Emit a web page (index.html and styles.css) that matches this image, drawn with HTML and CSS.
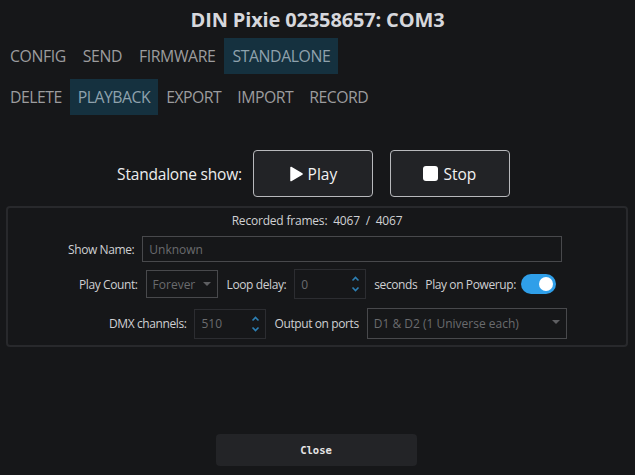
FILE: index.html
```html
<!DOCTYPE html>
<html lang="en">
<head>
  <meta charset="UTF-8">
  <title>DIN Pixie 02358657: COM3</title>
  <link rel="stylesheet" href="styles.css">
</head>
<body>
  <h1 class="title">DIN Pixie 02358657: COM3</h1>

  <nav class="tabs main">
    <a class="tab">CONFIG</a>
    <a class="tab">SEND</a>
    <a class="tab">FIRMWARE</a>
    <a class="tab active">STANDALONE</a>
  </nav>
  <nav class="tabs sub">
    <a class="tab">DELETE</a>
    <a class="tab active">PLAYBACK</a>
    <a class="tab">EXPORT</a>
    <a class="tab">IMPORT</a>
    <a class="tab">RECORD</a>
  </nav>

  <div class="show-row">
    <span class="show-label">Standalone show:</span>
    <button class="big-btn play">
      <svg width="14" height="16" viewBox="0 0 14 16"><path d="M2 1.5 L13 8 L2 14.5 Z" fill="#fff" stroke="#fff" stroke-width="1.5" stroke-linejoin="round"/></svg>
      Play
    </button>
    <button class="big-btn stop">
      <svg width="15" height="15" viewBox="0 0 15 15"><rect x="0" y="0" width="15" height="15" rx="3" fill="#fff"/></svg>
      Stop
    </button>
  </div>

  <section class="panel">
    <div class="frames">Recorded frames:&nbsp; 4067 &nbsp;/&nbsp; 4067</div>

    <div class="row row-name">
      <label class="lbl">Show Name:</label>
      <div class="field name-field">Unknown</div>
    </div>

    <div class="row row-count">
      <label class="lbl">Play Count:</label>
      <div class="field select count-select">Forever<span class="caret"></span></div>
      <label class="lbl">Loop delay:</label>
      <div class="field spin">0
        <span class="arrows">
          <svg width="9" height="16" viewBox="0 0 9 16"><path d="M1.5 4.5 L4.5 1.5 L7.5 4.5" fill="none" stroke="#2d7fb3" stroke-width="1.6"/><path d="M1.5 11.5 L4.5 14.5 L7.5 11.5" fill="none" stroke="#2d7fb3" stroke-width="1.6"/></svg>
        </span>
      </div>
      <span class="lbl">seconds</span>
      <label class="lbl">Play on Powerup:</label>
      <span class="toggle"><span class="knob"></span></span>
    </div>

    <div class="row row-dmx">
      <label class="lbl">DMX channels:</label>
      <div class="field spin">510
        <span class="arrows">
          <svg width="9" height="16" viewBox="0 0 9 16"><path d="M1.5 4.5 L4.5 1.5 L7.5 4.5" fill="none" stroke="#2d7fb3" stroke-width="1.6"/><path d="M1.5 11.5 L4.5 14.5 L7.5 11.5" fill="none" stroke="#2d7fb3" stroke-width="1.6"/></svg>
        </span>
      </div>
      <label class="lbl">Output on ports</label>
      <div class="field select ports-select">D1 &amp; D2 (1 Universe each)<span class="caret"></span></div>
    </div>
  </section>

  <div class="footer">
    <button class="close-btn">Close</button>
  </div>
</body>
</html>
```

FILE: styles.css
```css
body {
  margin: 0;
  background: #161719;
  color: #d2d3d6;
  font-family: "Open Sans", "Noto Sans", sans-serif;
  height: 475px;
  display: flex;
  flex-direction: column;
}
.title {
  margin: 9px 0 7px;
  font-size: 20px;
  font-weight: 700;
  text-align: center;
  color: #d6d7dc;
  line-height: 22px;
  letter-spacing: -0.15px;
}
.tabs {
  display: flex;
  padding-left: 2px;
  height: 36px;
}
.tabs.main {
  gap: 1px;
}
.tabs.sub {
  margin-top: 5px;
}
.tab {
  display: flex;
  align-items: center;
  padding: 0 8px;
  font-size: 15.8px;
  color: #9c9c9e;
  letter-spacing: -0.4px;
}
.tabs.sub .tab {
  letter-spacing: -0.5px;
}
.tab.active {
  background: #15313f;
  color: #8fa2ad;
}
.show-row {
  display: flex;
  justify-content: center;
  align-items: center;
  margin-top: 35px;
  padding-right: 8px;
}
.show-label {
  font-size: 15.5px;
  color: #eceded;
  margin-right: 11px;
  letter-spacing: -0.2px;
}
.big-btn {
  width: 120px;
  height: 47px;
  background: #222326;
  border: 1px solid #b8b9bc;
  border-radius: 4px;
  color: #f2f2f2;
  font-family: inherit;
  font-size: 15.5px;
  display: flex;
  align-items: center;
  justify-content: center;
  gap: 5px;
}
.big-btn.stop {
  margin-left: 17px;
}
.panel {
  margin: 9px 7px 0 6px;
  border: 2px solid #28292c;
  border-radius: 4px;
  height: 137px;
  font-size: 12px;
}
.frames {
  text-align: center;
  margin-top: 5px;
  line-height: 16px;
  color: #d0d1d4;
  letter-spacing: -0.2px;
}
.row {
  display: flex;
  align-items: center;
  gap: 8px;
}
.lbl {
  color: #cfd0d3;
  white-space: nowrap;
  letter-spacing: -0.4px;
}
.field {
  box-sizing: border-box;
  border: 1px solid #48494c;
  color: #6a6b6e;
  display: flex;
  align-items: center;
  padding-left: 6px;
  position: relative;
}
.row-name {
  margin-top: 7px;
  padding-left: 60px;
}
.name-field {
  width: 420px;
  height: 26px;
}
.row-count {
  margin-top: 7px;
  padding-left: 71px;
}
.count-select {
  width: 72px;
  height: 28px;
  margin-right: 1px;
}
.caret {
  position: absolute;
  right: 6px;
  top: 11px;
  border-left: 4px solid transparent;
  border-right: 4px solid transparent;
  border-top: 4px solid #5e5f62;
}
.spin {
  width: 72px;
  height: 30px;
  border-color: #2c2d31;
}
.arrows {
  position: absolute;
  right: 5px;
  top: 6px;
  display: flex;
}
.toggle {
  width: 35px;
  height: 20px;
  border-radius: 10px;
  background: #2f9fe9;
  position: relative;
  margin-left: -3px;
}
.knob {
  position: absolute;
  right: 3px;
  top: 3px;
  width: 14px;
  height: 14px;
  border-radius: 50%;
  background: #fff;
}
.row-dmx {
  margin-top: 9px;
  padding-left: 101px;
}
.ports-select {
  width: 200px;
  height: 31px;
}
.footer {
  margin-top: auto;
  margin-bottom: 9px;
  display: flex;
  justify-content: center;
}
.close-btn {
  width: 201px;
  height: 32px;
  background: #232427;
  border: none;
  border-radius: 4px;
  color: #e6e6e6;
  font-family: "DejaVu Sans Mono", monospace;
  font-weight: 700;
  font-size: 10.5px;
  margin-left: -3px;
}
```
